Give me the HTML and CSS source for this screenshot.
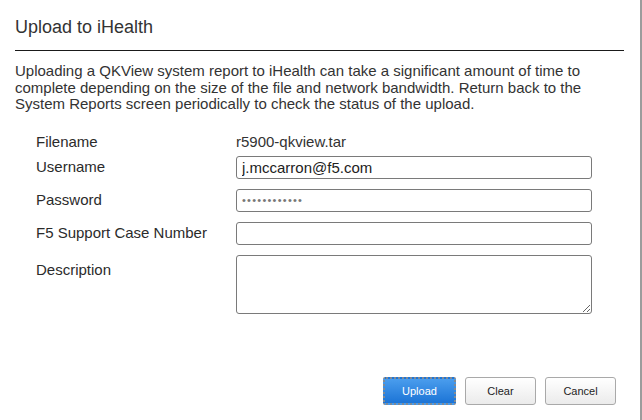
FILE: index.html
```html
<!DOCTYPE html>
<html lang="en">
<head>
<meta charset="utf-8">
<title>Upload to iHealth</title>
<link rel="stylesheet" href="styles.css">
</head>
<body>
<div class="page">
  <div class="dialog">
    <h1 class="title">Upload to iHealth</h1>
    <p class="intro">Uploading a QKView system report to iHealth can take a significant amount of time to complete depending on the size of the file and network bandwidth. Return back to the System Reports screen periodically to check the status of the upload.</p>
    <div class="form">
      <div class="row row-static">
        <span class="label">Filename</span>
        <span class="value">r5900-qkview.tar</span>
      </div>
      <div class="row row-field">
        <label class="label" for="user">Username</label>
        <input class="field" id="user" type="text" value="j.mccarron@f5.com">
      </div>
      <div class="row row-field">
        <label class="label" for="pass">Password</label>
        <input class="field field-pass" id="pass" type="password" value="abcdefghijkl">
      </div>
      <div class="row row-field">
        <label class="label" for="case">F5 Support Case Number</label>
        <input class="field" id="case" type="text" value="">
      </div>
      <div class="row row-area">
        <label class="label label-area" for="desc">Description</label>
        <textarea class="field field-area" id="desc"></textarea>
      </div>
    </div>
    <div class="actions">
      <button class="btn btn-primary" type="button">Upload</button>
      <button class="btn" type="button">Clear</button>
      <button class="btn" type="button">Cancel</button>
    </div>
  </div>
</div>
</body>
</html>
```

FILE: styles.css
```css
html, body {
  margin: 0;
  padding: 0;
  background: #ffffff;
}

body {
  font-family: "Liberation Sans", Arial, sans-serif;
  color: #333333;
}

.page {
  width: 642px;
  height: 420px;
  box-sizing: border-box;
  border-right: 2px solid #9c9c9c;
  background: #ffffff;
  overflow: hidden;
}

.dialog {
  padding: 17px 16px 0 15px;
}

.title {
  margin: 0;
  font-size: 18px;
  font-weight: normal;
  line-height: 21px;
  color: #333333;
  padding-bottom: 12px;
  border-bottom: 1px solid #1a1a1a;
}

.intro {
  margin: 12px 0 0;
  font-size: 15px;
  line-height: 16.5px;
  color: #333333;
}

.form {
  margin: 21px 0 0 21px;
  display: flex;
  flex-direction: column;
}

.row {
  display: flex;
  align-items: center;
}

.row-static {
  height: 16px;
  margin-bottom: 6px;
}

.row-field {
  margin-bottom: 10px;
}

.row-area {
  align-items: flex-start;
}

.label {
  flex: none;
  width: 200px;
  font-size: 15px;
  line-height: 16px;
  color: #2b2b2b;
}

.label-area {
  padding-top: 7px;
}

.value {
  font-size: 15px;
  line-height: 16px;
  color: #333333;
}

.field {
  box-sizing: border-box;
  width: 356px;
  height: 23px;
  margin: 0;
  border: 1px solid #7a7a7a;
  border-radius: 3px;
  padding: 0 5px;
  font-family: "Liberation Sans", Arial, sans-serif;
  font-size: 15px;
  color: #222222;
  background: #ffffff;
  outline: none;
}

.field-pass {
  color: #777777;
  font-size: 11px;
  letter-spacing: 1.25px;
}

.field-area {
  height: 59px;
  display: block;
  resize: vertical;
}

.actions {
  display: flex;
  justify-content: flex-end;
  gap: 9px;
  margin-top: 63.5px;
  padding-right: 8px;
}

.btn {
  box-sizing: border-box;
  width: 71px;
  height: 28px;
  margin: 0;
  padding: 0;
  border: 1px solid #a9a9a9;
  border-radius: 3px;
  background: linear-gradient(#ffffff, #ebebeb);
  font-family: "Liberation Sans", Arial, sans-serif;
  font-size: 11px;
  color: #1e1e1e;
}

.btn-primary {
  width: 73px;
  border: 2px dotted #7f8a96;
  border-radius: 2px;
  background: linear-gradient(#4a9ded, #1c74d6);
  color: #ffffff;
}
```
